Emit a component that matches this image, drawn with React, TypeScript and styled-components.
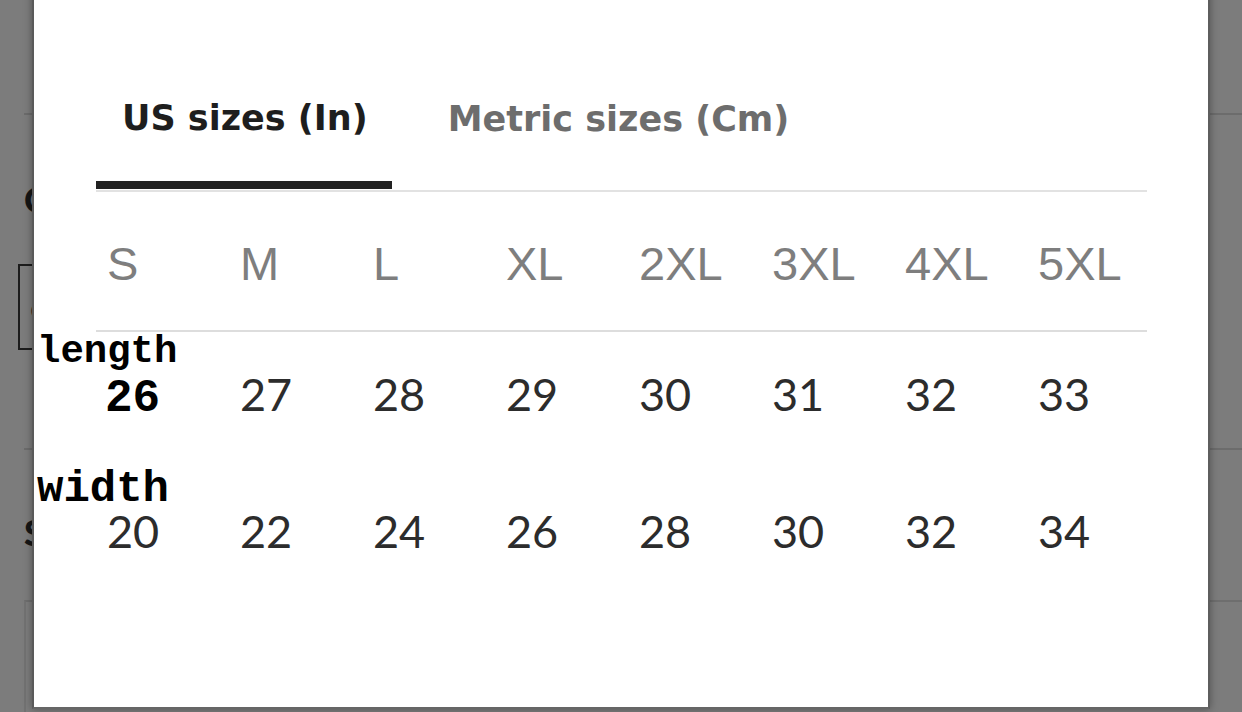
import styled, { createGlobalStyle } from 'styled-components'

const GlobalStyle = createGlobalStyle`
    html, body {
        margin: 0;
        padding: 0;
        width: 1242px;
        height: 712px;
        overflow: hidden;
        background: #7c7c7c;
    }
    * { box-sizing: border-box; }
`

const sizes = ['S', 'M', 'L', 'XL', '2XL', '3XL', '4XL', '5XL']
const lengths = ['26', '27', '28', '29', '30', '31', '32', '33']
const widths = ['20', '22', '24', '26', '28', '30', '32', '34']

function App() {
    return (
        <Screen>
            <GlobalStyle />
            <BackPage>
                <BackDivider $top={113} />
                <BackHeading $top={66}>Choose a size</BackHeading>
                <BackInput>
                    <span>o</span>
                </BackInput>
                <BackDivider $top={98} />
                <BackHeading $top={64}>Size guide</BackHeading>
                <BackPanel />
            </BackPage>

            <Modal>
                <TabList>
                    <Tab $active>US sizes (In)</Tab>
                    <Tab>Metric sizes (Cm)</Tab>
                </TabList>

                <SizeTable>
                    <HeadRow>
                        {sizes.map((s) => (
                            <HeadCell key={s}>{s}</HeadCell>
                        ))}
                    </HeadRow>

                    <RowLabel $size={39} $line={36}>length</RowLabel>
                    <DataRow $gap={2}>
                        {lengths.map((v, i) =>
                            i === 0 ? <EditedCell key={i}>{v}</EditedCell> : <DataCell key={i}>{v}</DataCell>
                        )}
                    </DataRow>

                    <RowLabel $size={44} $line={36} $space={49}>width</RowLabel>
                    <DataRow $gap={2}>
                        {widths.map((v, i) => (
                            <DataCell key={i}>{v}</DataCell>
                        ))}
                    </DataRow>
                </SizeTable>
            </Modal>
        </Screen>
    )
}

export default App

const Screen = styled.div`
    position: relative;
    width: 1242px;
    height: 712px;
    overflow: hidden;
    background: #7c7c7c;
`

const BackPage = styled.div`
    display: flex;
    flex-direction: column;
    width: 100%;
    height: 100%;
    padding-left: 24px;
`

const BackDivider = styled.div<{ $top: number }>`
    margin-top: ${(p) => p.$top}px;
    height: 2px;
    width: 100%;
    background: #6c6c6c;
`

const BackHeading = styled.div<{ $top: number }>`
    margin-top: ${(p) => p.$top}px;
    font-family: 'Lato', sans-serif;
    font-weight: 900;
    font-size: 36px;
    line-height: 36px;
    color: #161616;
    height: 36px;
`

const BackInput = styled.div`
    margin: 47px 0 0 -6px;
    height: 86px;
    width: 400px;
    border: 2px solid #1c1c1c;
    display: flex;
    align-items: center;
    padding-left: 10px;
    font-family: 'Lato', sans-serif;
    font-size: 30px;
    color: #2a2a2a;
`

const BackPanel = styled.div`
    margin-top: 50px;
    flex: 1;
    border-top: 2px solid #6e6e6e;
    border-left: 2px solid #727272;
`

const Modal = styled.div`
    position: absolute;
    left: 32px;
    top: -20px;
    width: 1178px;
    height: 729px;
    background: #ffffff;
    border-left: 2px solid #5a5a5a;
    border-right: 2px solid #5e5e5e;
    border-bottom: 2px solid #666;
    box-shadow: 0 0 8px rgba(0, 0, 0, 0.35);
    padding: 20px 61px 0 62px;
    display: flex;
    flex-direction: column;
`

const TabList = styled.div`
    display: flex;
    align-items: flex-end;
    height: 192px;
    border-bottom: 2px solid #e2e2e2;
    gap: 30px;
`

const Tab = styled.div<{ $active?: boolean }>`
    font-family: 'DejaVu Sans', 'Open Sans', sans-serif;
    font-weight: 700;
    font-size: 35px;
    line-height: 44px;
    padding: 0 24px 49px 26px;
    color: ${(p) => (p.$active ? '#1e1e1e' : '#6d6d6d')};
    box-shadow: ${(p) => (p.$active ? 'inset 0 -8px 0 #222222' : 'none')};
    margin-bottom: ${(p) => (p.$active ? '1px' : '0')};
`

const SizeTable = styled.div`
    display: flex;
    flex-direction: column;
`

const HeadRow = styled.div`
    display: grid;
    grid-template-columns: repeat(8, 133px);
    padding: 48px 0 43px 11px;
    border-bottom: 2px solid #dddddd;
`

const HeadCell = styled.div`
    font-family: 'Liberation Sans', Arial, sans-serif;
    font-size: 47px;
    line-height: 47px;
    color: #7e7e7e;
`

const RowLabel = styled.div<{ $size: number; $line: number; $space?: number }>`
    margin: ${(p) => p.$space ?? 2}px 0 0 -59px;
    font-family: 'Courier New', 'Liberation Mono', monospace;
    font-weight: 700;
    font-size: ${(p) => p.$size}px;
    line-height: ${(p) => p.$line}px;
    color: #000000;
`

const DataRow = styled.div<{ $gap: number }>`
    display: grid;
    grid-template-columns: repeat(8, 133px);
    align-items: baseline;
    padding-left: 11px;
    margin-top: ${(p) => p.$gap}px;
`

const DataCell = styled.div`
    font-family: 'Lato', sans-serif;
    font-size: 45px;
    line-height: 45px;
    color: #2c2c2c;
`

const EditedCell = styled.div`
    margin-left: -2px;
    font-family: 'Courier New', 'Liberation Mono', monospace;
    font-weight: 700;
    font-size: 46px;
    line-height: 45px;
    color: #000000;
`
